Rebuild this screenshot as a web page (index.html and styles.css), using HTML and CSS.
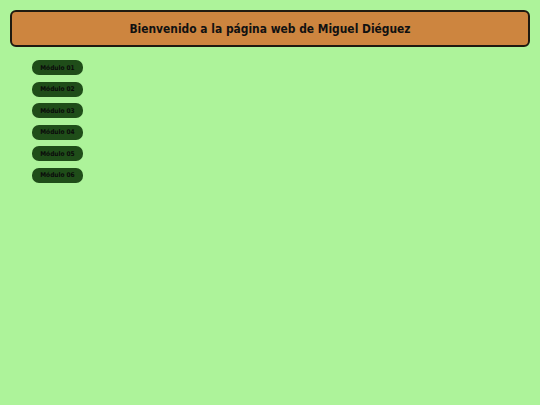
FILE: index.html
```html
<!DOCTYPE html>
<html lang="es">
<head>
<meta charset="utf-8">
<title>Miguel Diéguez</title>
<link rel="stylesheet" href="styles.css">
</head>
<body>
<header class="banner">
  <h1 class="banner-title">Bienvenido a la página web de Miguel Diéguez</h1>
</header>
<nav class="modules">
  <a class="module-btn" href="#">Módulo 01</a>
  <a class="module-btn" href="#">Módulo 02</a>
  <a class="module-btn" href="#">Módulo 03</a>
  <a class="module-btn" href="#">Módulo 04</a>
  <a class="module-btn" href="#">Módulo 05</a>
  <a class="module-btn" href="#">Módulo 06</a>
</nav>
</body>
</html>
```
FILE: styles.css
```css
html, body {
  margin: 0;
  padding: 0;
}
body {
  background: #adf39a;
  font-family: "DejaVu Sans Condensed", "DejaVu Sans", sans-serif;
  padding: 10px;
  min-height: 405px;
  box-sizing: border-box;
}
.banner {
  background: #cd853f;
  border: 2px solid #1f1a10;
  border-radius: 6px;
  height: 37px;
  box-sizing: border-box;
  display: flex;
  align-items: center;
  justify-content: center;
}
.banner-title {
  margin: 0;
  font-size: 11.9px;
  font-weight: bold;
  color: #111;
  letter-spacing: 0;
}
.modules {
  display: flex;
  flex-direction: column;
  align-items: flex-start;
  gap: 6.6px;
  margin-top: 13px;
  padding-left: 22px;
}
.module-btn {
  display: flex;
  align-items: center;
  justify-content: center;
  width: 51px;
  height: 15px;
  border-radius: 7px;
  background: #1f4d19;
  color: #0a0a0a;
  font-size: 6.5px;
  font-weight: bold;
  text-decoration: none;
}
```
